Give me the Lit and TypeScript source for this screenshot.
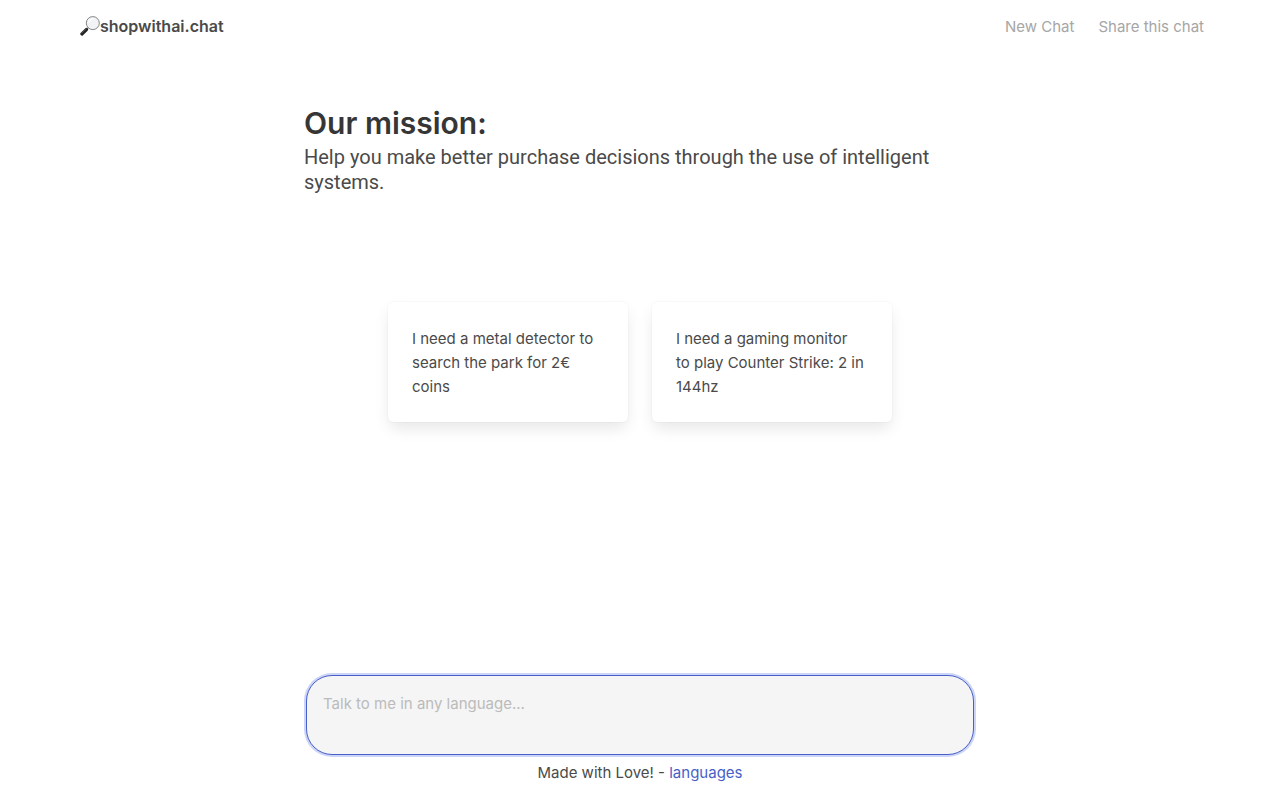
import { LitElement, html, css } from "lit";
import { customElement, state } from "lit/decorators.js";

@customElement("app-root")
export class AppRoot extends LitElement {
  static styles = css`
    :host {
      display: flex;
      flex-direction: column;
      box-sizing: border-box;
      min-height: 100vh;
      background: #fff;
      color: #4a4a4a;
      font-family: Inter, "Liberation Sans", sans-serif;
      font-size: 15px;
      line-height: 24px;
    }
    .navbar {
      display: flex;
      justify-content: space-between;
      align-items: center;
      height: 52px;
      padding: 0 76px 0 80px;
    }
    a {
      text-decoration: none;
    }
    .brand {
      display: flex;
      align-items: center;
      color: #4a4a4a;
      font-size: 16px;
      font-weight: 600;
    }
    .lens {
      width: 20px;
      height: 20px;
    }
    .links {
      display: flex;
      gap: 24px;
      padding-top: 2px;
    }
    .links a {
      color: #a6a6a6;
    }
    main {
      display: flex;
      flex: 1;
      flex-direction: column;
      box-sizing: border-box;
      width: 100%;
      max-width: 672px;
      margin: 0 auto;
      padding: 53px 0 15px;
    }
    h1 {
      margin: 0 0 4px;
      color: #363636;
      font-size: 30px;
      font-weight: 600;
      line-height: 36px;
    }
    .subtitle {
      margin: 0;
      font-family: Roboto, Inter, sans-serif;
      font-size: 20px;
      line-height: 25px;
    }
    .suggestions {
      display: grid;
      grid-template-columns: 1fr 1fr;
      gap: 24px;
      margin: 107px 84px 24px;
    }
    .card {
      padding: 25px 24px 23px;
      border: 0;
      border-radius: 6px;
      background: #fff;
      box-shadow: 0 8px 16px -2px rgba(10, 10, 10, 0.1),
        0 0 0 1px rgba(10, 10, 10, 0.02);
      color: inherit;
      font: inherit;
      text-align: left;
      white-space: pre-line;
      cursor: pointer;
    }
    .composer {
      display: flex;
      margin-top: auto;
      padding: 0 2px;
    }
    textarea {
      flex: 1;
      box-sizing: border-box;
      height: 80px;
      padding: 16px;
      border: 1px solid #485fc7;
      border-radius: 26px;
      outline: none;
      background: #f5f5f5;
      box-shadow: 0 0 0 2px #ccd5f8;
      color: #363636;
      font: inherit;
      resize: none;
    }
    textarea::placeholder {
      color: #bbb;
      opacity: 1;
    }
    footer {
      margin-top: 6px;
      text-align: center;
    }
    footer a {
      color: #485fc7;
    }
  `;

  @state() private draft = "";

  private suggestions = [
    "I need a metal detector to\nsearch the park for 2€\ncoins",
    "I need a gaming monitor\nto play Counter Strike: 2 in\n144hz",
  ];

  render() {
    return html`
      <nav class="navbar">
        <a class="brand" href="#">
          <svg class="lens" viewBox="0 0 20 20" aria-hidden="true">
            <path d="M8.200 11.800 6 14" stroke="#888" stroke-width="1.500" />
            <path d="M6.500 13.500 1.900 18" stroke="#222" stroke-width="3.200" stroke-linecap="round" />
            <path d="M5.700 13 1.700 17" stroke="#777" stroke-width=".7" stroke-linecap="round" />
            <circle cx="12.800" cy="7.100" r="6.500" fill="#f1f3f4" stroke="#858585" stroke-width="1" />
            <path d="M8.600 6.500a4.300 4.300 0 0 1 5-3.500" fill="none" stroke="#fff" stroke-width="1.300" />
          </svg>
          <span>shopwithai.chat</span>
        </a>
        <div class="links">
          <a href="#new">New Chat</a>
          <a href="#share">Share this chat</a>
        </div>
      </nav>
      <main>
        <h1>Our mission:</h1>
        <p class="subtitle">
          Help you make better purchase decisions through the use of intelligent systems.
        </p>
        <div class="suggestions">
          ${this.suggestions.map(
            (text) => html`<button class="card" type="button" @click=${() => (this.draft = text.replace(/\n/g, " "))}>${text}</button>`
          )}
        </div>
        <div class="composer">
          <textarea
            aria-label="Message"
            placeholder="Talk to me in any language..."
            .value=${this.draft}
            @input=${(e: Event) => (this.draft = (e.target as HTMLTextAreaElement).value)}
          ></textarea>
        </div>
        <footer>Made with Love! - <a href="#languages">languages</a></footer>
      </main>
    `;
  }
}
